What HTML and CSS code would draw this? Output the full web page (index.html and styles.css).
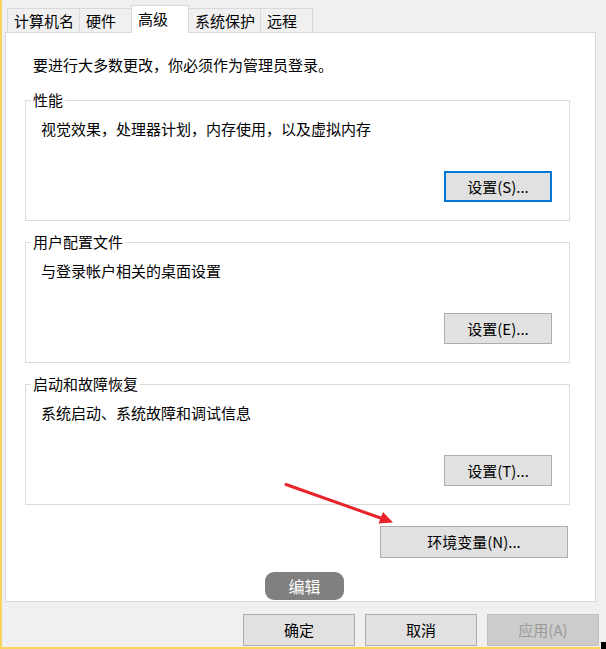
FILE: index.html
```html
<!DOCTYPE html>
<html lang="zh-CN">
<head>
<meta charset="utf-8">
<title>系统属性 - 高级</title>
<link rel="stylesheet" href="styles.css">
</head>
<body>
<div class="frame">
  <div class="tabs">
    <div class="tab">计算机名</div>
    <div class="tab">硬件</div>
    <div class="tab tab-active">高级</div>
    <div class="tab">系统保护</div>
    <div class="tab">远程</div>
  </div>
  <div class="panel">
    <p class="intro">要进行大多数更改，你必须作为管理员登录。</p>

    <fieldset class="group">
      <legend class="group-label">性能</legend>
      <div class="group-body">
        <p class="group-desc">视觉效果，处理器计划，内存使用，以及虚拟内存</p>
        <div class="group-actions"><button class="btn btn-default">设置(S)...</button></div>
      </div>
    </fieldset>

    <fieldset class="group">
      <legend class="group-label">用户配置文件</legend>
      <div class="group-body">
        <p class="group-desc">与登录帐户相关的桌面设置</p>
        <div class="group-actions"><button class="btn">设置(E)...</button></div>
      </div>
    </fieldset>

    <fieldset class="group">
      <legend class="group-label">启动和故障恢复</legend>
      <div class="group-body">
        <p class="group-desc">系统启动、系统故障和调试信息</p>
        <div class="group-actions"><button class="btn">设置(T)...</button></div>
      </div>
    </fieldset>

    <div class="env-row"><button class="btn btn-env">环境变量(N)...</button></div>
    <div class="edit-pill">编辑</div>
  </div>
  <div class="dialog-actions">
    <button class="btn btn-dialog">确定</button>
    <button class="btn btn-dialog">取消</button>
    <button class="btn btn-dialog" disabled>应用(A)</button>
  </div>

  <svg class="arrow" width="112" height="46" viewBox="284 480 112 46">
    <line x1="286" y1="484.5" x2="382" y2="518.5" stroke="#e8242a" stroke-width="3" stroke-linecap="round"/>
    <polygon points="393,522.5 378.5,523.5 383,512" fill="#e8242a"/>
  </svg>
  <div class="grip"></div>
</div>
</body>
</html>
```

FILE: styles.css
```css
html, body {
  margin: 0;
  padding: 0;
  background: #f0f0f0;
}

body {
  font-family: "Noto Sans CJK SC", "Microsoft YaHei", sans-serif;
  font-size: 15px;
  line-height: 20px;
  color: #000;
}

.frame {
  position: relative;
  width: 600px;
  height: 649px;
  box-sizing: border-box;
  border-left: 2px solid #fad35c;
  border-bottom: 2px solid #fad35c;
  padding: 5px 1px 0 3px;
}

.tabs {
  display: flex;
  align-items: flex-end;
  height: 27px;
  margin-left: 2px;
}

.tab {
  box-sizing: border-box;
  height: 24px;
  line-height: 23px;
  min-width: 53px;
  padding: 0 5px 0 6px;
  margin-left: -1px;
  border: 1px solid #d9d9d9;
  border-bottom: none;
  background: #f0f0f0;
  white-space: nowrap;
}

.tab:first-child {
  margin-left: 0;
}

.tab-active {
  position: relative;
  z-index: 1;
  height: 28px;
  line-height: 26px;
  min-width: 58px;
  margin-bottom: -1px;
  background: #fff;
}

.panel {
  box-sizing: border-box;
  width: 591px;
  height: 570px;
  border: 1px solid #d9d9d9;
  background: #fff;
  padding: 0 25px 0 19px;
  display: flex;
  flex-direction: column;
}

.intro {
  margin: 22px 0 0 8px;
}

.group {
  margin: 15px 0 0 0;
  padding: 0;
  border: 1px solid #dcdcdc;
  min-inline-size: 0;
}

.group + .group {
  margin-top: 11px;
}

.group-label {
  margin-left: 5px;
  padding: 0 2px;
  line-height: 20px;
}

.group-body {
  padding: 0 17px 18px 15px;
}

.group-desc {
  margin: 9px 0 0 0;
}

.group-actions {
  display: flex;
  justify-content: flex-end;
  margin-top: 32px;
}

.btn {
  box-sizing: border-box;
  font-family: inherit;
  font-size: 15px;
  line-height: 20px;
  color: #000;
  background: #e1e1e1;
  border: 1px solid #adadad;
  border-radius: 0;
  padding: 0;
  margin: 0;
  width: 108px;
  height: 31px;
}

.btn-default {
  border: 2px solid #0078d7;
}

.env-row {
  display: flex;
  justify-content: flex-end;
  margin-top: 21px;
  padding-right: 2px;
}

.btn-env {
  width: 188px;
  height: 32px;
}

.edit-pill {
  align-self: flex-start;
  margin: 14px 0 0 240px;
  width: 79px;
  height: 28px;
  border-radius: 9px;
  background: #808080;
  color: #fff;
  font-size: 16px;
  line-height: 28px;
  text-align: center;
}

.dialog-actions {
  display: flex;
  justify-content: flex-end;
  gap: 10px;
  margin-top: 12px;
}

.btn-dialog {
  width: 112px;
  height: 32px;
}

.btn-dialog:disabled {
  background: #cccccc;
  border-color: #bfbfbf;
  color: #9a9a9a;
}

.arrow {
  position: absolute;
  left: 282px;
  top: 480px;
  pointer-events: none;
}

.grip {
  position: absolute;
  right: -6px;
  bottom: -2px;
  width: 5px;
  height: 7px;
  background: #000;
}
```
